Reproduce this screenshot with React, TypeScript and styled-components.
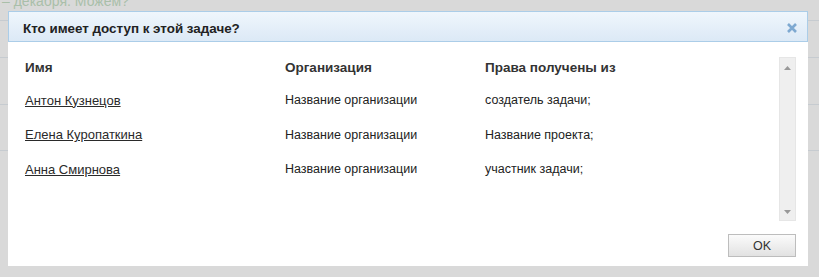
import React from "react"
import styled, { createGlobalStyle } from "styled-components"

const GlobalStyle = createGlobalStyle`
	html, body {
		margin: 0;
		padding: 0;
		background: #d9d9d9;
		font-family: "Liberation Sans", Arial, sans-serif;
	}
`

const Page = styled.div`
	position: relative;
	width: 819px;
	height: 277px;
	overflow: hidden;
	background: #d9d9d9;
`

const Backdrop = styled.div`
	display: flex;
	flex-direction: column;
	color: #a9bfa9;
	font-size: 14px;
	margin-top: -6px;
`

const BackLine = styled.div<{ $h: number }>`
	height: ${(p) => p.$h}px;
	border-bottom: 1px solid #c6cbd0;
	box-sizing: border-box;
	line-height: 14px;
	overflow: hidden;
	white-space: nowrap;
	padding-left: 2px;
`

const Dialog = styled.div`
	position: absolute;
	left: 8px;
	top: 11px;
	width: 800px;
	height: 255px;
	background: #fff;
	display: flex;
	flex-direction: column;
`

const Header = styled.div`
	height: 31px;
	box-sizing: border-box;
	border: 1px solid #abcde8;
	background: linear-gradient(#eff6fc, #dce9f6);
	display: flex;
	align-items: center;
	justify-content: space-between;
	padding: 3px 10px 0 14px;
`

const Title = styled.div`
	font-size: 13.4px;
	font-weight: bold;
	color: #222;
`

const Body = styled.div`
	flex: 1;
	display: flex;
	padding: 13px 12px 0 17px;
`

const TableWrap = styled.div`
	flex: 1;
`

const Table = styled.table`
	border-collapse: collapse;
	font-size: 12.5px;
	color: #222;
`

const Th = styled.th<{ $w: number }>`
	width: ${(p) => p.$w}px;
	text-align: left;
	font-weight: bold;
	font-size: 13.5px;
	height: 24px;
	padding: 0 0 4px;
	color: #333;
`

const Td = styled.td`
	height: 34.5px;
	padding: 0;
	vertical-align: middle;
`

const NameLink = styled.a`
	color: #2a2a2a;
	text-decoration: underline;
	cursor: pointer;
	font-size: 13px;
`

const Scroll = styled.div`
	width: 17px;
	height: 164px;
	margin-top: 2px;
	box-sizing: border-box;
	border: 1px solid #e6e6e6;
	background: #efefef;
	display: flex;
	flex-direction: column;
	justify-content: space-between;
	align-items: center;
	padding: 8px 0 6px;
`

const Footer = styled.div`
	display: flex;
	justify-content: flex-end;
	padding: 0 12px 9px 0;
`

const OkButton = styled.button`
	width: 68px;
	height: 23px;
	border: 1px solid #bdbdbd;
	background: linear-gradient(#fbfbfb, #e2e2e2);
	font-family: "Liberation Sans", Arial, sans-serif;
	font-size: 12.5px;
	color: #333;
	padding: 0;
`

const rows = [
	{ name: "Антон Кузнецов", org: "Название организации", src: "создатель задачи;" },
	{ name: "Елена Куропаткина", org: "Название организации", src: "Название проекта;" },
	{ name: "Анна Смирнова", org: "Название организации", src: "участник задачи;" },
]

export default function App() {
	return (
		<Page>
			<GlobalStyle />
			<Backdrop>
				<BackLine $h={27}>– декабря. Можем?</BackLine>
				<BackLine $h={37} />
				<BackLine $h={47} />
				<BackLine $h={46} />
			</Backdrop>
			<Dialog>
				<Header>
					<Title>Кто имеет доступ к этой задаче?</Title>
					<svg width="10" height="10" viewBox="0 0 10 10">
						<path d="M1 1 L9 9 M9 1 L1 9" stroke="#7ea9d1" strokeWidth="2.6" />
					</svg>
				</Header>
				<Body>
					<TableWrap>
						<Table>
							<thead>
								<tr>
									<Th $w={260}>Имя</Th>
									<Th $w={200}>Организация</Th>
									<Th $w={200}>Права получены из</Th>
								</tr>
							</thead>
							<tbody>
								{rows.map((r) => (
									<tr key={r.name}>
										<Td>
											<NameLink>{r.name}</NameLink>
										</Td>
										<Td>{r.org}</Td>
										<Td>{r.src}</Td>
									</tr>
								))}
							</tbody>
						</Table>
					</TableWrap>
					<Scroll>
						<svg width="7" height="4" viewBox="0 0 7 4">
							<path d="M0 4 L3.5 0 L7 4 Z" fill="#999" />
						</svg>
						<svg width="7" height="4" viewBox="0 0 7 4">
							<path d="M0 0 L3.5 4 L7 0 Z" fill="#999" />
						</svg>
					</Scroll>
				</Body>
				<Footer>
					<OkButton>OK</OkButton>
				</Footer>
			</Dialog>
		</Page>
	)
}
